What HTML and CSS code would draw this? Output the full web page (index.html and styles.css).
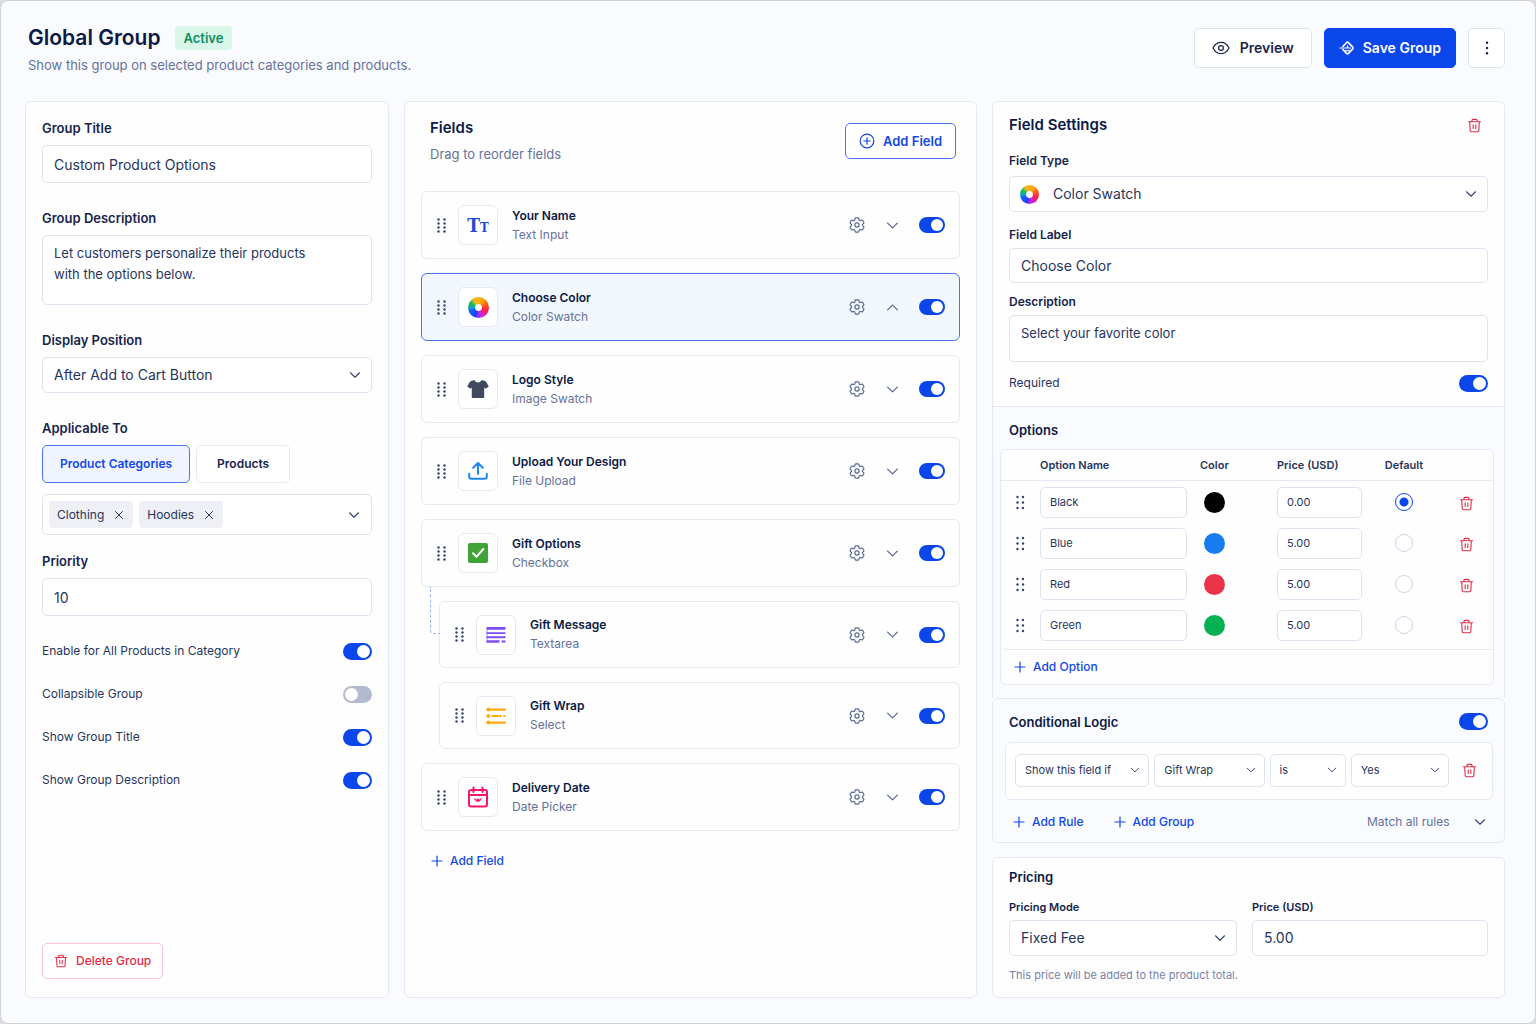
FILE: index.html
```html
<!DOCTYPE html>
<html lang="en">
<head>
    <meta charset="UTF-8">
    <meta name="viewport" content="width=device-width, initial-scale=1.0">
    <title>Global Group</title>
    <link rel="stylesheet" href="styles.css">
</head>
<body>

<!-- Icon sprite -->
<svg class="sprite" aria-hidden="true">
    <symbol id="i-chevron" viewBox="0 0 12 12"><path d="M1.500 3.800 6 8.200l4.500-4.400"/></symbol>
    <symbol id="i-plus" viewBox="0 0 12 12"><path d="M6 1v10M1 6h10"/></symbol>
    <symbol id="i-close" viewBox="0 0 12 12"><path d="m2.500 2.500 7 7m0-7-7 7"/></symbol>
    <symbol id="i-plus-circle" viewBox="0 0 16 16"><circle cx="8" cy="8" r="6.800"/><path d="M8 4.800v6.400M4.800 8h6.400"/></symbol>
    <symbol id="i-trash" viewBox="0 0 16 16"><path d="M1.500 4h13M5.300 4V2.600c0-.6.500-1.100 1.100-1.100h3.200c.6 0 1.100.5 1.100 1.100V4M2.900 4l.5 9.300c0 .8.600 1.300 1.300 1.300h6.600c.7 0 1.300-.5 1.300-1.300l.5-9.300M6.600 7.300v3.900M9.400 7.300v3.900"/></symbol>
    <symbol id="i-grip" viewBox="0 0 9 15"><g fill="currentColor" stroke="none"><circle cx="1.500" cy="1.500" r="1.200"/><circle cx="7.500" cy="1.500" r="1.200"/><circle cx="1.500" cy="5.500" r="1.200"/><circle cx="7.500" cy="5.500" r="1.200"/><circle cx="1.500" cy="9.500" r="1.200"/><circle cx="7.500" cy="9.500" r="1.200"/><circle cx="1.500" cy="13.500" r="1.200"/><circle cx="7.500" cy="13.500" r="1.200"/></g></symbol>
    <symbol id="i-grip-sm" viewBox="0 0 9 15"><g fill="currentColor" stroke="none"><circle cx="1.500" cy="2" r="1.200"/><circle cx="7" cy="2" r="1.200"/><circle cx="1.500" cy="7.500" r="1.200"/><circle cx="7" cy="7.500" r="1.200"/><circle cx="1.500" cy="13" r="1.200"/><circle cx="7" cy="13" r="1.200"/></g></symbol>
    <symbol id="i-gear" viewBox="2 2 20 20"><g stroke-width="1.500"><path d="M9.594 3.940c.09-.542.56-.94 1.110-.94h2.593c.55 0 1.020.398 1.110.94l.213 1.281c.063.374.313.686.645.87.074.04.147.083.22.127.325.196.72.257 1.075.124l1.217-.456a1.125 1.125 0 0 1 1.370.49l1.296 2.247a1.125 1.125 0 0 1-.26 1.431l-1.003.827c-.293.241-.438.613-.43.992a7.723 7.723 0 0 1 0 .255c-.008.378.137.75.43.991l1.004.827c.424.35.534.955.26 1.430l-1.298 2.247a1.125 1.125 0 0 1-1.369.491l-1.217-.456c-.355-.133-.75-.072-1.076.124a6.470 6.470 0 0 1-.22.128c-.331.183-.581.495-.644.869l-.213 1.281c-.09.543-.56.94-1.110.94h-2.594c-.55 0-1.019-.398-1.110-.94l-.213-1.281c-.062-.374-.312-.686-.644-.87a6.520 6.520 0 0 1-.22-.127c-.325-.196-.72-.257-1.076-.124l-1.217.456a1.125 1.125 0 0 1-1.369-.49l-1.297-2.247a1.125 1.125 0 0 1 .26-1.431l1.004-.827c.292-.24.437-.613.43-.991a6.932 6.932 0 0 1 0-.255c.007-.38-.138-.751-.43-.992l-1.004-.827a1.125 1.125 0 0 1-.26-1.430l1.297-2.247a1.125 1.125 0 0 1 1.370-.491l1.216.456c.356.133.751.072 1.076-.124.072-.044.146-.086.22-.128.332-.183.582-.495.644-.869l.214-1.280Z"/><circle cx="12" cy="12" r="2.600"/></g></symbol>
    <symbol id="i-eye" viewBox="0 0 18 14"><path d="M1 7c1.800-3.600 4.700-5.600 8-5.600s6.200 2 8 5.600c-1.800 3.600-4.700 5.600-8 5.600S2.800 10.600 1 7Z"/><circle cx="9" cy="7" r="2.400"/></symbol>
    <symbol id="i-save" viewBox="0 0 16 16"><path stroke-width="1.700" d="M3.800 6.500 7.300 2.800c.8-.8 1.600-.8 2.400 0l3.800 4c.7.700.7 1.700 0 2.400l-3.800 4c-.8.800-1.600.8-2.400 0L3.800 9.500"/><path d="M1 8h10.500M6.700 10.300c1.100.8 2.500.8 3.600 0M8.500 5.600V8"/></symbol>
    <symbol id="i-dots" viewBox="0 0 4 16"><g fill="currentColor" stroke="none"><circle cx="2" cy="2.800" r="1.200"/><circle cx="2" cy="8" r="1.200"/><circle cx="2" cy="13.200" r="1.200"/></g></symbol>
</svg>

<div class="app">
    <header class="page-header">
        <div>
            <div class="title-row">
                <h1>Global Group</h1>
                <span class="badge">Active</span>
            </div>
            <p class="subtitle">Show this group on selected product categories and products.</p>
        </div>
        <div class="actions">
            <button type="button" class="btn btn-lg"><svg class="icon icon-eye"><use href="#i-eye"/></svg>Preview</button>
            <button type="button" class="btn btn-lg btn-primary"><svg class="icon"><use href="#i-save"/></svg>Save Group</button>
            <button type="button" class="btn btn-lg btn-more" aria-label="More actions"><svg class="icon"><use href="#i-dots"/></svg></button>
        </div>
    </header>

    <main class="columns">
        <!-- Group -->
        <form class="panel group-form">
            <div class="field">
                <label for="group-title">Group Title</label>
                <input class="control" type="text" id="group-title" value="Custom Product Options">
            </div>
            <div class="field">
                <label for="group-desc">Group Description</label>
                <textarea class="control" id="group-desc">Let customers personalize their products
with the options below.</textarea>
            </div>
            <div class="field">
                <label for="position">Display Position</label>
                <div class="select">
                    <select class="control" id="position"><option>After Add to Cart Button</option></select>
                    <svg class="icon chevron"><use href="#i-chevron"/></svg>
                </div>
            </div>
            <div class="field field-tight">
                <span class="label">Applicable To</span>
                <div class="tabs">
                    <button type="button" class="tab active">Product Categories</button>
                    <button type="button" class="tab">Products</button>
                </div>
                <div class="tag-box">
                    <span class="tag">Clothing <button type="button" aria-label="Remove Clothing"><svg class="icon"><use href="#i-close"/></svg></button></span>
                    <span class="tag">Hoodies <button type="button" aria-label="Remove Hoodies"><svg class="icon"><use href="#i-close"/></svg></button></span>
                    <button type="button" class="icon-btn tag-toggle" aria-label="Show categories"><svg class="icon chevron"><use href="#i-chevron"/></svg></button>
                </div>
            </div>
            <div class="field">
                <label for="priority">Priority</label>
                <input class="control" type="text" id="priority" value="10">
            </div>
            <div class="switches">
                <label class="switch-row">Enable for All Products in Category <input type="checkbox" class="switch" checked></label>
                <label class="switch-row">Collapsible Group <input type="checkbox" class="switch"></label>
                <label class="switch-row">Show Group Title <input type="checkbox" class="switch" checked></label>
                <label class="switch-row">Show Group Description <input type="checkbox" class="switch" checked></label>
            </div>
            <button type="button" class="btn btn-danger"><svg class="icon"><use href="#i-trash"/></svg>Delete Group</button>
        </form>

        <!-- Fields -->
        <section class="panel fields">
            <div class="fields-head">
                <div>
                    <h2>Fields</h2>
                    <p>Drag to reorder fields</p>
                </div>
                <button type="button" class="btn btn-outline"><svg class="icon"><use href="#i-plus-circle"/></svg>Add Field</button>
            </div>

            <ul class="field-list">
                <li class="card">
                    <svg class="icon grip"><use href="#i-grip"/></svg>
                    <span class="tile tile-text" aria-hidden="true">T<small>T</small></span>
                    <div class="card-text"><h3>Your Name</h3><p>Text Input</p></div>
                    <button type="button" class="icon-btn" aria-label="Settings"><svg class="icon"><use href="#i-gear"/></svg></button>
                    <button type="button" class="icon-btn" aria-label="Expand"><svg class="icon chevron"><use href="#i-chevron"/></svg></button>
                    <input type="checkbox" class="switch switch-sm" aria-label="Enable Your Name" checked>
                </li>
                <li class="card selected">
                    <svg class="icon grip"><use href="#i-grip"/></svg>
                    <span class="tile"><span class="wheel"></span></span>
                    <div class="card-text"><h3>Choose Color</h3><p>Color Swatch</p></div>
                    <button type="button" class="icon-btn" aria-label="Settings"><svg class="icon"><use href="#i-gear"/></svg></button>
                    <button type="button" class="icon-btn" aria-label="Collapse"><svg class="icon chevron up"><use href="#i-chevron"/></svg></button>
                    <input type="checkbox" class="switch switch-sm" aria-label="Enable Choose Color" checked>
                </li>
                <li class="card">
                    <svg class="icon grip"><use href="#i-grip"/></svg>
                    <span class="tile">
                        <svg width="22" height="20" viewBox="0 0 22 20"><path fill="#3f4a60" d="M7.200 1c1 1.700 2.200 2.400 3.800 2.400S13.800 2.700 14.800 1l3 1c.8.300 1.300.7 1.700 1.400L21.800 7.500l-3.400 2.300-1.200-1.300V18c0 .6-.4 1-1 1H5.800c-.6 0-1-.4-1-1V8.500L3.600 9.800.2 7.500l2.300-4.100c.4-.7.900-1.100 1.700-1.400Z"/></svg>
                    </span>
                    <div class="card-text"><h3>Logo Style</h3><p>Image Swatch</p></div>
                    <button type="button" class="icon-btn" aria-label="Settings"><svg class="icon"><use href="#i-gear"/></svg></button>
                    <button type="button" class="icon-btn" aria-label="Expand"><svg class="icon chevron"><use href="#i-chevron"/></svg></button>
                    <input type="checkbox" class="switch switch-sm" aria-label="Enable Logo Style" checked>
                </li>
                <li class="card">
                    <svg class="icon grip"><use href="#i-grip"/></svg>
                    <span class="tile">
                        <svg width="20" height="20" viewBox="0 0 20 20" fill="none" stroke="#1e88f5" stroke-width="2" stroke-linecap="round" stroke-linejoin="round"><path d="M10 13V2.200M5.200 6.700 10 2l4.800 4.700M1.200 12.800v2.700c0 1.400.8 2.200 2.200 2.200h13.200c1.400 0 2.200-.8 2.200-2.200v-2.700"/></svg>
                    </span>
                    <div class="card-text"><h3>Upload Your Design</h3><p>File Upload</p></div>
                    <button type="button" class="icon-btn" aria-label="Settings"><svg class="icon"><use href="#i-gear"/></svg></button>
                    <button type="button" class="icon-btn" aria-label="Expand"><svg class="icon chevron"><use href="#i-chevron"/></svg></button>
                    <input type="checkbox" class="switch switch-sm" aria-label="Enable Upload Your Design" checked>
                </li>
                <li class="card">
                    <svg class="icon grip"><use href="#i-grip"/></svg>
                    <span class="tile">
                        <svg width="20" height="20" viewBox="0 0 20 20"><rect width="20" height="20" rx="2" fill="#3fa336"/><path d="m5 10.300 3.400 3.500L15.300 6" fill="none" stroke="#fff" stroke-width="2" stroke-linecap="round" stroke-linejoin="round"/></svg>
                    </span>
                    <div class="card-text"><h3>Gift Options</h3><p>Checkbox</p></div>
                    <button type="button" class="icon-btn" aria-label="Settings"><svg class="icon"><use href="#i-gear"/></svg></button>
                    <button type="button" class="icon-btn" aria-label="Expand"><svg class="icon chevron"><use href="#i-chevron"/></svg></button>
                    <input type="checkbox" class="switch switch-sm" aria-label="Enable Gift Options" checked>
                </li>
                <li class="card nested linked">
                    <svg class="icon grip"><use href="#i-grip"/></svg>
                    <span class="tile">
                        <svg width="20" height="18" viewBox="0 0 20 18" fill="#7c4dff"><path d="M.5 1h19v2.800H.5zM.5 6.200h19v1.800H.5zM.5 10.300h19v2H.5zM.5 14.300h13v2.400H.5zM15.500 14.600h4v1.800h-4z"/><path d="M.5 3h1.200v13H.5z" opacity=".5"/></svg>
                    </span>
                    <div class="card-text"><h3>Gift Message</h3><p>Textarea</p></div>
                    <button type="button" class="icon-btn" aria-label="Settings"><svg class="icon"><use href="#i-gear"/></svg></button>
                    <button type="button" class="icon-btn" aria-label="Expand"><svg class="icon chevron"><use href="#i-chevron"/></svg></button>
                    <input type="checkbox" class="switch switch-sm" aria-label="Enable Gift Message" checked>
                </li>
                <li class="card nested">
                    <svg class="icon grip"><use href="#i-grip"/></svg>
                    <span class="tile">
                        <svg width="20" height="18" viewBox="0 0 20 18" fill="#ffaa0d" stroke="#ffaa0d" stroke-linecap="round"><path stroke-width="2.400" d="M2 2.600h16.800M2 15.600h16.800"/><path stroke-width="1.800" d="M6 9h9M18 9h.8"/><g stroke="none"><circle cx="2.300" cy="2.600" r="2"/><circle cx="2.300" cy="9" r="2"/><circle cx="2.300" cy="15.600" r="2"/></g></svg>
                    </span>
                    <div class="card-text"><h3>Gift Wrap</h3><p>Select</p></div>
                    <button type="button" class="icon-btn" aria-label="Settings"><svg class="icon"><use href="#i-gear"/></svg></button>
                    <button type="button" class="icon-btn" aria-label="Expand"><svg class="icon chevron"><use href="#i-chevron"/></svg></button>
                    <input type="checkbox" class="switch switch-sm" aria-label="Enable Gift Wrap" checked>
                </li>
                <li class="card">
                    <svg class="icon grip"><use href="#i-grip"/></svg>
                    <span class="tile">
                        <svg width="20" height="22" viewBox="0 0 20 22" fill="none" stroke="#f5146e" stroke-width="2" stroke-linecap="round" stroke-linejoin="round"><rect x="1" y="4" width="18" height="16.500" rx="2"/><path d="M5.500 1.500V6M14.500 1.500V6M1.500 9h17"/><path stroke-width="1.300" d="M7 12.800c.3 1.600 1.400 2 3 .5 1.600 1.500 2.700 1.100 3-.5M8.800 15h2.400"/></svg>
                    </span>
                    <div class="card-text"><h3>Delivery Date</h3><p>Date Picker</p></div>
                    <button type="button" class="icon-btn" aria-label="Settings"><svg class="icon"><use href="#i-gear"/></svg></button>
                    <button type="button" class="icon-btn" aria-label="Expand"><svg class="icon chevron"><use href="#i-chevron"/></svg></button>
                    <input type="checkbox" class="switch switch-sm" aria-label="Enable Delivery Date" checked>
                </li>
            </ul>
            <button type="button" class="link-btn"><svg class="icon"><use href="#i-plus"/></svg>Add Field</button>
        </section>

        <!-- Settings -->
        <div class="side">
            <section class="panel settings">
                <div class="settings-main">
                    <div class="head-row">
                        <h2>Field Settings</h2>
                        <button type="button" class="icon-btn trash" aria-label="Delete field"><svg class="icon"><use href="#i-trash"/></svg></button>
                    </div>
                    <label for="field-type">Field Type</label>
                    <div class="select has-wheel">
                        <select class="control" id="field-type"><option>Color Swatch</option></select>
                        <span class="wheel"></span>
                        <svg class="icon chevron"><use href="#i-chevron"/></svg>
                    </div>
                    <label for="field-label">Field Label</label>
                    <input class="control" type="text" id="field-label" value="Choose Color">
                    <label for="field-desc">Description</label>
                    <textarea class="control" id="field-desc">Select your favorite color</textarea>
                    <label class="switch-row">Required <input type="checkbox" class="switch" checked></label>
                </div>

                <div class="options">
                    <h2>Options</h2>
                    <div class="options-box">
                        <div class="table-wrap">
                            <table>
                                <colgroup><col class="col-grip"><col><col class="col-color"><col class="col-price"><col class="col-default"><col class="col-trash"></colgroup>
                                <thead>
                                    <tr><th></th><th>Option Name</th><th>Color</th><th>Price (USD)</th><th class="center">Default</th><th></th></tr>
                                </thead>
                                <tbody>
                                    <tr>
                                        <td class="center"><svg class="icon grip"><use href="#i-grip-sm"/></svg></td>
                                        <td><input class="control name" type="text" value="Black" aria-label="Option name"></td>
                                        <td><input class="swatch" type="color" value="#000000" aria-label="Black"></td>
                                        <td><input class="control price" type="text" value="0.00" aria-label="Price"></td>
                                        <td class="center"><input type="radio" name="default" aria-label="Default Black" checked></td>
                                        <td class="center"><button type="button" class="icon-btn trash" aria-label="Delete Black"><svg class="icon"><use href="#i-trash"/></svg></button></td>
                                    </tr>
                                    <tr>
                                        <td class="center"><svg class="icon grip"><use href="#i-grip-sm"/></svg></td>
                                        <td><input class="control name" type="text" value="Blue" aria-label="Option name"></td>
                                        <td><input class="swatch" type="color" value="#167cf0" aria-label="Blue"></td>
                                        <td><input class="control price" type="text" value="5.00" aria-label="Price"></td>
                                        <td class="center"><input type="radio" name="default" aria-label="Default Blue"></td>
                                        <td class="center"><button type="button" class="icon-btn trash" aria-label="Delete Blue"><svg class="icon"><use href="#i-trash"/></svg></button></td>
                                    </tr>
                                    <tr>
                                        <td class="center"><svg class="icon grip"><use href="#i-grip-sm"/></svg></td>
                                        <td><input class="control name" type="text" value="Red" aria-label="Option name"></td>
                                        <td><input class="swatch" type="color" value="#eb3349" aria-label="Red"></td>
                                        <td><input class="control price" type="text" value="5.00" aria-label="Price"></td>
                                        <td class="center"><input type="radio" name="default" aria-label="Default Red"></td>
                                        <td class="center"><button type="button" class="icon-btn trash" aria-label="Delete Red"><svg class="icon"><use href="#i-trash"/></svg></button></td>
                                    </tr>
                                    <tr>
                                        <td class="center"><svg class="icon grip"><use href="#i-grip-sm"/></svg></td>
                                        <td><input class="control name" type="text" value="Green" aria-label="Option name"></td>
                                        <td><input class="swatch" type="color" value="#06b153" aria-label="Green"></td>
                                        <td><input class="control price" type="text" value="5.00" aria-label="Price"></td>
                                        <td class="center"><input type="radio" name="default" aria-label="Default Green"></td>
                                        <td class="center"><button type="button" class="icon-btn trash" aria-label="Delete Green"><svg class="icon"><use href="#i-trash"/></svg></button></td>
                                    </tr>
                                </tbody>
                            </table>
                        </div>
                        <button type="button" class="link-btn"><svg class="icon"><use href="#i-plus"/></svg>Add Option</button>
                    </div>
                </div>
            </section>

            <section class="panel logic">
                <div class="head-row">
                    <h2 id="logic-title">Conditional Logic</h2>
                    <input type="checkbox" class="switch" aria-labelledby="logic-title" checked>
                </div>
                <div class="rule">
                    <div class="select"><select class="control" aria-label="Action"><option>Show this field if</option></select><svg class="icon chevron"><use href="#i-chevron"/></svg></div>
                    <div class="select"><select class="control" aria-label="Field"><option>Gift Wrap</option></select><svg class="icon chevron"><use href="#i-chevron"/></svg></div>
                    <div class="select"><select class="control" aria-label="Operator"><option>is</option></select><svg class="icon chevron"><use href="#i-chevron"/></svg></div>
                    <div class="select"><select class="control" aria-label="Value"><option>Yes</option></select><svg class="icon chevron"><use href="#i-chevron"/></svg></div>
                    <button type="button" class="icon-btn trash" aria-label="Delete rule"><svg class="icon"><use href="#i-trash"/></svg></button>
                </div>
                <div class="rule-actions">
                    <button type="button" class="link-btn"><svg class="icon"><use href="#i-plus"/></svg>Add Rule</button>
                    <button type="button" class="link-btn"><svg class="icon"><use href="#i-plus"/></svg>Add Group</button>
                    <div class="select match"><select aria-label="Match mode"><option>Match all rules</option></select><svg class="icon chevron"><use href="#i-chevron"/></svg></div>
                </div>
            </section>

            <section class="panel pricing">
                <h2>Pricing</h2>
                <div class="pricing-grid">
                    <div>
                        <label for="mode">Pricing Mode</label>
                        <div class="select">
                            <select class="control" id="mode"><option>Fixed Fee</option></select>
                            <svg class="icon chevron"><use href="#i-chevron"/></svg>
                        </div>
                    </div>
                    <div>
                        <label for="price">Price (USD)</label>
                        <input class="control" type="text" id="price" value="5.00">
                    </div>
                </div>
                <p class="hint">This price will be added to the product total.</p>
            </section>
        </div>
    </main>
</div>

</body>
</html>
```

FILE: styles.css
```css
* {
    box-sizing: border-box;
}

body {
    margin: 0;
    background-color: #dcdde0;
    font-family: Inter, "Liberation Sans", sans-serif;
    font-size: 13px;
    line-height: 20px;
    color: #26355d;
}

h1, h2, h3, p, ul {
    margin: 0;
    padding: 0;
}

h1, h2, h3 {
    color: #0b1a45;
    font-weight: 600;
}

h2 {
    font-size: 13px;
}

button, input, select, textarea {
    font: inherit;
    color: inherit;
    margin: 0;
}

button {
    cursor: pointer;
}

.sprite {
    display: none;
}

.icon {
    display: block;
    flex: none;
    width: 16px;
    height: 16px;
    fill: none;
    stroke: currentColor;
    stroke-width: 1.2;
    stroke-linecap: round;
    stroke-linejoin: round;
}

.chevron {
    width: 12px;
    height: 12px;
    color: #3c4a72;
}

.chevron.up {
    transform: rotate(180deg);
}

.app {
    display: flex;
    flex-direction: column;
    min-height: 100vh;
    border: 1px solid #cfd0d3;
    border-radius: 8px;
    background-color: #fafbfe;
    padding: 22px 30px 25px 24px;
}

/* Header */

.page-header {
    display: flex;
    justify-content: space-between;
    padding-left: 3px;
    margin-bottom: 24px;
}

.title-row {
    display: flex;
    align-items: center;
    gap: 14px;
}

h1 {
    font-size: 21px;
    line-height: 30px;
}

.badge {
    background-color: #d9f7e8;
    color: #0b8f62;
    font-weight: 600;
    line-height: 24px;
    padding: 0 9px;
    border-radius: 4px;
}

.subtitle {
    font-size: 13px;
    line-height: 24px;
    color: #65729a;
}

.actions {
    display: flex;
    gap: 12px;
    padding-top: 5px;
    height: 45px;
}

.btn {
    display: inline-flex;
    align-items: center;
    justify-content: center;
    gap: 8px;
    height: 36px;
    padding: 0 13px;
    border: 1px solid #dde3ef;
    border-radius: 5px;
    background-color: #fff;
    font-weight: 600;
    white-space: nowrap;
}

.btn-lg {
    height: 40px;
    padding: 0 17px;
    font-size: 14px;
    color: #17244c;
}

.icon-eye {
    width: 18px;
    height: 14px;
    margin-right: 2px;
}

.btn-primary {
    background-color: #0b46ea;
    border-color: #0b46ea;
    color: #fff;
    padding: 0 14px;
}

.btn-more {
    width: 37px;
    padding: 0;
}

.btn-outline {
    border-color: #4a74f2;
    color: #1148e6;
}

.btn-danger {
    border-color: #fbc5cb;
    color: #e22b45;
    font-size: 12px;
    font-weight: 500;
    padding: 0 11px;
}

.btn-danger .icon {
    width: 14px;
    height: 14px;
}

/* Panels */

.columns {
    flex: 1;
    display: grid;
    grid-template-columns: 364fr 573fr 513fr;
    gap: 15px;
}

.panel {
    min-width: 0;
    border: 1px solid #e5e9f3;
    border-radius: 6px;
    background-color: #fefeff;
}

label, .label {
    display: block;
    font-weight: 600;
    color: #17244c;
}

.control {
    display: block;
    width: 100%;
    height: 38px;
    padding: 0 11px;
    border: 1px solid #dde3ef;
    border-radius: 5px;
    background-color: #fff;
    font-size: 14px;
}

textarea.control {
    padding-top: 7px;
    font-size: 13px;
    line-height: 21px;
    resize: none;
    overflow: hidden;
}

select {
    appearance: none;
    cursor: pointer;
}

.select {
    display: grid;
    align-items: center;
}

.select > * {
    grid-area: 1 / 1;
}

.select select.control {
    height: 36px;
}

.select .chevron {
    justify-self: end;
    margin-right: 11px;
    pointer-events: none;
}

.icon-btn {
    display: inline-flex;
    align-items: center;
    justify-content: center;
    padding: 0;
    border: 0;
    background: none;
    color: #5b6a92;
}

.trash {
    color: #d9304a;
}

.link-btn {
    display: inline-flex;
    align-items: center;
    gap: 7px;
    padding: 0;
    border: 0;
    background: none;
    color: #1148e6;
    font-size: 12px;
    font-weight: 500;
}

.link-btn .icon {
    width: 12px;
    height: 12px;
}

/* Toggle switch */

.switch {
    appearance: none;
    flex: none;
    width: 29px;
    height: 17px;
    padding: 2px;
    border-radius: 9px;
    background-color: #b3bbd0;
    cursor: pointer;
}

.switch::before {
    content: "";
    display: block;
    width: 13px;
    height: 13px;
    border-radius: 50%;
    background-color: #fff;
}

.switch:checked {
    background-color: #0b46ea;
}

.switch:checked::before {
    margin-left: auto;
}

.switch-sm {
    width: 26px;
    height: 16px;
}

.switch-sm::before {
    width: 12px;
    height: 12px;
}

.switch-row {
    display: flex;
    align-items: center;
    justify-content: space-between;
    font-size: 12px;
    font-weight: 400;
    color: #26355d;
}

/* Group form */

.group-form {
    display: flex;
    flex-direction: column;
    padding: 16px 16px 18px;
}

.field {
    margin-bottom: 25px;
}

.field label, .field .label {
    margin-bottom: 7px;
}

.field textarea {
    height: 70px;
}

.field-tight {
    margin-bottom: 16px;
}

.tabs {
    display: flex;
    gap: 6px;
    margin-bottom: 11px;
}

.tab {
    height: 38px;
    padding: 0 20px;
    border: 1px solid #e5e9f3;
    border-radius: 5px;
    background-color: #fff;
    color: #17244c;
    font-size: 12px;
    font-weight: 600;
}

.tab.active {
    padding: 0 17px;
    border-color: #4a74f2;
    background-color: #f0f4fe;
    color: #1148e6;
}

.tag-box {
    display: flex;
    align-items: center;
    gap: 6px;
    height: 41px;
    padding: 0 11px 0 6px;
    border: 1px solid #dde3ef;
    border-radius: 5px;
    background-color: #fff;
}

.tag {
    display: flex;
    align-items: center;
    gap: 9px;
    height: 27px;
    padding: 0 8px;
    border-radius: 4px;
    background-color: #eef0f6;
    font-size: 12px;
}

.tag button {
    padding: 0;
    border: 0;
    background: none;
}

.tag .icon {
    width: 12px;
    height: 12px;
    stroke-width: 1;
}

.tag-toggle {
    margin-left: auto;
}

.switches {
    display: grid;
    gap: 23px;
}

.btn-danger {
    align-self: flex-start;
    margin-top: auto;
}

/* Field list */

.fields {
    padding: 16px;
}

.fields-head {
    display: flex;
    justify-content: space-between;
    padding: 0 4px 0 9px;
    margin-bottom: 27px;
}

.fields-head h2 {
    font-size: 15px;
    margin-bottom: 6px;
}

.fields-head p {
    color: #65729a;
}

.fields-head .btn {
    margin-top: 5px;
}

.field-list {
    display: flex;
    flex-direction: column;
    gap: 14px;
    list-style: none;
}

.card {
    position: relative;
    display: flex;
    align-items: center;
    height: 68px;
    padding: 0 14px 0 15px;
    border: 1px solid #e5e9f3;
    border-radius: 6px;
    background-color: #fefeff;
}

.card.selected {
    border-color: #4a74f2;
    background-color: #f3f7fe;
}

.card.nested {
    height: 67px;
    margin-left: 18px;
}

/* dotted line from the parent card */
.linked::before {
    content: "";
    position: absolute;
    left: -10px;
    top: -15px;
    width: 9px;
    height: 46px;
    border-left: 1px dashed #9db3f5;
    border-bottom: 1px dashed #9db3f5;
    border-bottom-left-radius: 4px;
}

.grip {
    width: 9px;
    height: 15px;
    color: #34436e;
}

.tile {
    display: flex;
    align-items: center;
    justify-content: center;
    width: 40px;
    height: 40px;
    margin: 0 14px 0 12px;
    border: 1px solid #e5e9f3;
    border-radius: 6px;
    background-color: #fff;
}

.tile-text {
    align-items: baseline;
    font: 700 19px/38px "DejaVu Serif Condensed", "DejaVu Serif", serif;
    color: #1d4bd1;
}

.tile-text small {
    font-size: 13px;
}

.card-text {
    flex: 1;
}

.card-text h3 {
    font-size: 12px;
    line-height: 19px;
}

.card-text p {
    font-size: 12px;
    color: #65729a;
}

.card .icon-btn {
    width: 16px;
    height: 16px;
    margin-right: 19px;
}

.card .chevron {
    width: 13px;
    height: 13px;
    color: #5b6a92;
}

.wheel {
    width: 21px;
    height: 21px;
    border-radius: 50%;
    background:
        radial-gradient(circle, #fff 3px, transparent 4px),
        conic-gradient(#ffb31a 0deg, #ff9a0a 40deg, #ff6a1a 60deg, #ff2a3c 100deg, #f31f6a 130deg, #d41fd8 150deg, #a32bf0 185deg, #1a3dff 195deg, #1467ff 255deg, #10a8b8 265deg, #1fb75a 300deg, #8cc63f 318deg, #ffb31a 328deg);
}

.fields > .link-btn {
    margin: 20px 0 0 10px;
}

/* Right column */

.side {
    display: flex;
    flex-direction: column;
    min-width: 0;
}

.head-row {
    display: flex;
    align-items: center;
    justify-content: space-between;
}

.settings {
    border-bottom: 0;
    border-radius: 6px 6px 0 0;
    background-color: #fafbfe;
}

.settings-main {
    padding: 13px 16px 13px;
    border-bottom: 1px solid #e5e9f3;
    border-radius: 6px 6px 0 0;
    background-color: #fefeff;
}

.settings-main .head-row {
    margin-bottom: 16px;
    padding-right: 6px;
}

.settings-main h2 {
    font-size: 15px;
}

.settings-main label {
    font-size: 12px;
    margin-bottom: 5px;
}

.settings-main .select {
    margin-bottom: 13px;
}

.settings-main label[for="field-label"],
.settings-main label[for="field-desc"] {
    margin-bottom: 3px;
}

.has-wheel select {
    padding-left: 43px;
}

.has-wheel .wheel {
    width: 19px;
    height: 19px;
    margin-left: 11px;
    pointer-events: none;
}

.settings-main input.control {
    height: 35px;
    margin-bottom: 9px;
}

.settings-main textarea {
    height: 47px;
    margin-bottom: 11px;
}

.settings-main .switch-row {
    margin: 0;
}

.options {
    padding: 13px 10px 13px 7px;
}

.options h2 {
    padding-left: 9px;
    margin-bottom: 9px;
}

.options-box {
    border: 1px solid #e5e9f3;
    border-radius: 6px;
    background-color: #fefeff;
}

.table-wrap {
    padding-bottom: 3px;
    border-bottom: 1px solid #e5e9f3;
    border-bottom-left-radius: 6px;
}

table {
    width: 100%;
    table-layout: fixed;
    border-collapse: collapse;
}

.col-grip {
    width: 39px;
}

.col-color {
    width: 77px;
}

.col-price {
    width: 98px;
}

.col-default {
    width: 58px;
}

.col-trash {
    width: 60px;
}

th {
    height: 30px;
    padding: 0;
    border-bottom: 1px solid #e5e9f3;
    font-size: 11px;
    font-weight: 600;
    text-align: left;
}

tbody::before {
    content: "";
    display: block;
    height: 1px;
}

td {
    padding: 5px 0;
}

th.center, td.center {
    text-align: center;
}

td .icon {
    margin: 0 auto;
}

td .trash {
    margin-left: 6px;
    vertical-align: middle;
}

td .control {
    height: 31px;
    padding: 0 9px;
    font-size: 11px;
}

.name {
    max-width: calc(100% - 13px);
}

.price {
    max-width: 85px;
}

.swatch {
    appearance: none;
    display: block;
    width: 21px;
    height: 21px;
    margin-left: 4px;
    padding: 0;
    border: 0;
    background: none;
    cursor: pointer;
}

.swatch::-webkit-color-swatch-wrapper {
    padding: 0;
}

.swatch::-webkit-color-swatch {
    border: 0;
    border-radius: 50%;
}

input[type="radio"] {
    appearance: none;
    display: block;
    width: 18px;
    height: 18px;
    margin: 0 auto;
    border: 1px solid #cdd5e5;
    border-radius: 50%;
    background-color: #fff;
}

input[type="radio"]:checked {
    border-color: #1148e6;
    background: radial-gradient(circle, #0b46ea 4px, #fff 5px);
}

.options-box .link-btn {
    height: 34px;
    margin-left: 13px;
}

/* Conditional logic */

.logic {
    padding: 13px 11px 10px 12px;
    background-color: #fafbfe;
}

.logic .head-row {
    padding: 0 5px 0 4px;
    margin-bottom: 10px;
}

.rule {
    display: grid;
    grid-template-columns: 134fr 110fr 76fr 98fr 23px;
    align-items: center;
    gap: 5px;
    padding: 11px 15px 12px 9px;
    border: 1px solid #e5e9f3;
    border-radius: 6px;
    background-color: #fefeff;
}

.rule .select select {
    height: 33px;
    padding: 0 9px;
    font-size: 11px;
}

.rule .chevron {
    width: 10px;
    height: 10px;
    margin-right: 9px;
}

.rule .trash {
    justify-self: end;
}

.rule-actions {
    display: flex;
    gap: 30px;
    padding: 12px 7px 0 8px;
}

.match {
    margin-left: auto;
    font-size: 12px;
    color: #65729a;
}

.match select {
    padding: 0 36px 0 0;
    border: 0;
    background: none;
}

.match .chevron {
    margin-right: 0;
}

.trash .icon {
    width: 15px;
    height: 15px;
}

/* Pricing */

.pricing {
    flex: 1;
    margin-top: 14px;
    padding: 9px 16px 12px;
}

.pricing-grid {
    display: grid;
    grid-template-columns: 228fr 236fr;
    gap: 15px;
    margin: 10px 0 9px;
}

.pricing label {
    font-size: 11px;
    margin-bottom: 3px;
}

.pricing input.control {
    height: 36px;
}

.hint {
    font-size: 11px;
    color: #7783a5;
}
```
